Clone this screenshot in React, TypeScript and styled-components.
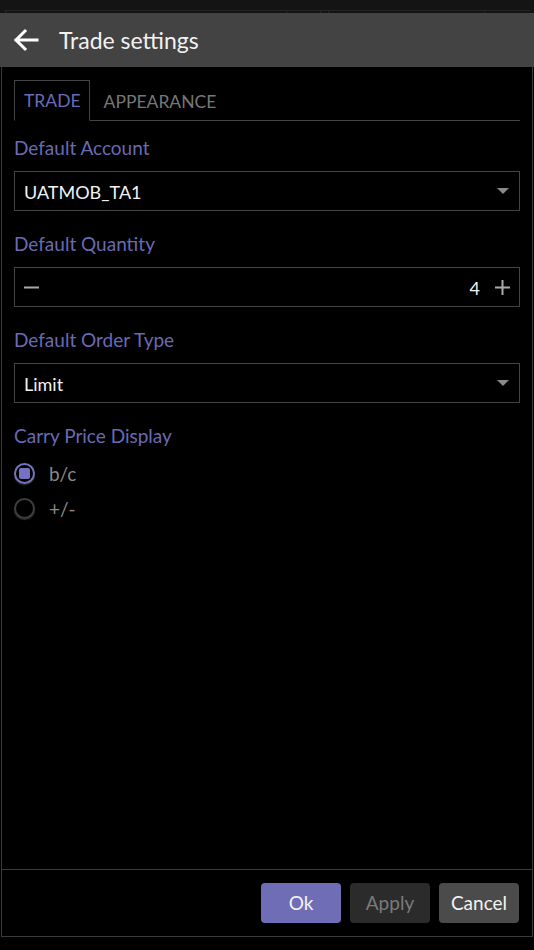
import React from "react";
import styled, { createGlobalStyle } from "styled-components";

const Global = createGlobalStyle`
  html, body { margin: 0; padding: 0; background: #000; }
  body { font-family: "Lato", "Noto Sans", sans-serif; -webkit-font-smoothing: antialiased; }
  * { box-sizing: border-box; }
`;

const Page = styled.div`
  width: 534px;
  height: 950px;
  background: #000;
  display: flex;
  flex-direction: column;
  overflow: hidden;
`;

const TopStrip = styled.div`
  height: 13px;
  background: #141414;
  display: flex;
  align-items: flex-end;
  padding: 0 4px 0 5px;
`;

const StripCell = styled.div<{ $w: number }>`
  width: ${(p) => p.$w}px;
  height: 3px;
  border-top: 1px solid #262626;
  border-left: 1px solid #262626;
  flex: ${(p) => (p.$w === 0 ? 1 : "none")};
`;

const Header = styled.div`
  height: 54px;
  background: #434343;
  display: flex;
  align-items: center;
  padding-left: 13px;
  gap: 20px;
`;

const Title = styled.div`
  color: #f2f2f2;
  font-size: 23px;
  line-height: 26px;
  padding-bottom: 1px;
`;

const Panel = styled.div`
  margin: 0 1px;
  height: 870px;
  border: 1px solid #3b3b3b;
  border-top: none;
  display: flex;
  flex-direction: column;
`;

const Content = styled.div`
  flex: 1;
  padding: 13px 12px 0 12px;
  display: flex;
  flex-direction: column;
`;

const Tabs = styled.div`
  display: flex;
  height: 41px;
  border-bottom: 1px solid #444;
  margin-bottom: 15px;
`;

const Tab = styled.div<{ $active?: boolean }>`
  height: 41px;
  display: flex;
  align-items: center;
  font-size: 17.5px;
  color: ${(p) => (p.$active ? "#6b6bb8" : "#777")};
  border: 1px solid ${(p) => (p.$active ? "#444" : "transparent")};
  border-bottom: ${(p) => (p.$active ? "1px solid #000" : "none")};
  margin-bottom: ${(p) => (p.$active ? "-1px" : "0")};
  padding: 0 8px 0 ${(p) => (p.$active ? "9px" : "13px")};
`;

const Section = styled.div`
  display: flex;
  flex-direction: column;
  margin-bottom: 21px;
`;

const Label = styled.div`
  color: #6a6ab4;
  font-size: 19px;
  line-height: 24px;
  height: 24px;
  margin-bottom: 11px;
`;

const Field = styled.div`
  height: 40px;
  border: 1px solid #444;
  display: flex;
  align-items: center;
  padding: 0 9px 0 9px;
  color: #f2f2f2;
  font-size: 18px;
`;

const FieldText = styled.span<{ $right?: boolean }>`
  flex: 1;
  text-align: ${(p) => (p.$right ? "right" : "left")};
  padding-right: ${(p) => (p.$right ? "15px" : "0")};
  padding-top: 1px;
`;

const Caret = styled.div`
  width: 0;
  height: 0;
  border-left: 6px solid transparent;
  border-right: 6px solid transparent;
  border-top: 6px solid #8a8a8a;
  margin-right: 1px;
`;

const RadioGroup = styled.div`
  display: flex;
  flex-direction: column;
  margin-top: -3px;
`;

const RadioRow = styled.div`
  height: 35px;
  display: flex;
  align-items: center;
  gap: 14px;
  color: #8a8a8a;
  font-size: 19px;
`;

const RadioCircle = styled.div<{ $checked?: boolean }>`
  width: 21px;
  height: 21px;
  border-radius: 50%;
  border: 2px solid ${(p) => (p.$checked ? "#7373c0" : "#3e3e3e")};
  box-shadow: 0 1px 1px rgba(90, 90, 90, 0.6);
  display: flex;
  align-items: center;
  justify-content: center;
`;

const RadioDot = styled.div`
  width: 11px;
  height: 11px;
  border-radius: 2px;
  background: #7373c0;
`;

const Footer = styled.div`
  height: 67px;
  border-top: 1px solid #3b3b3b;
  display: flex;
  justify-content: flex-end;
  align-items: flex-start;
  padding: 13px 13px 0 0;
  gap: 9px;
`;

const Button = styled.button<{ $variant: "primary" | "disabled" | "secondary" }>`
  width: 80px;
  height: 40px;
  border: none;
  border-radius: 4px;
  font-family: inherit;
  font-size: 19px;
  padding: 0 0 2px;
  background: ${(p) =>
    p.$variant === "primary" ? "#6f6db5" : p.$variant === "disabled" ? "#2b2b2b" : "#4b4b4b"};
  color: ${(p) => (p.$variant === "disabled" ? "#7a7a7a" : "#f2f2f2")};
`;

const Icon = styled.svg`
  display: block;
  flex: none;
`;

const BackArrow = () => (
  <Icon width="26" height="24" viewBox="0 0 26 24">
    <path d="M24 12H3M12 3L3 12l9 9" fill="none" stroke="#fff" strokeWidth="3" strokeLinecap="square" />
  </Icon>
);

const Minus = () => (
  <Icon width="15" height="15" viewBox="0 0 15 15">
    <path d="M0 7.5H15" stroke="#aaa" strokeWidth="2" />
  </Icon>
);

const Plus = () => (
  <Icon width="15" height="15" viewBox="0 0 15 15">
    <path d="M0 7.5H15M7.5 0V15" stroke="#aaa" strokeWidth="2" />
  </Icon>
);

export default function App() {
  return (
    <Page>
      <Global />
      <TopStrip>
        <StripCell $w={281} />
        <StripCell $w={34} />
        <StripCell $w={8} />
        <StripCell $w={156} />
        <StripCell $w={0} />
      </TopStrip>
      <Header>
        <BackArrow />
        <Title>Trade settings</Title>
      </Header>
      <Panel>
        <Content>
          <Tabs>
            <Tab $active>TRADE</Tab>
            <Tab>APPEARANCE</Tab>
          </Tabs>
          <Section>
            <Label>Default Account</Label>
            <Field>
              <FieldText>UATMOB_TA1</FieldText>
              <Caret />
            </Field>
          </Section>
          <Section>
            <Label>Default Quantity</Label>
            <Field>
              <Minus />
              <FieldText $right>4</FieldText>
              <Plus />
            </Field>
          </Section>
          <Section>
            <Label>Default Order Type</Label>
            <Field>
              <FieldText>Limit</FieldText>
              <Caret />
            </Field>
          </Section>
          <Section>
            <Label>Carry Price Display</Label>
            <RadioGroup>
              <RadioRow>
                <RadioCircle $checked>
                  <RadioDot />
                </RadioCircle>
                <span>b/c</span>
              </RadioRow>
              <RadioRow>
                <RadioCircle />
                <span>+/-</span>
              </RadioRow>
            </RadioGroup>
          </Section>
        </Content>
        <Footer>
          <Button $variant="primary">Ok</Button>
          <Button $variant="disabled">Apply</Button>
          <Button $variant="secondary">Cancel</Button>
        </Footer>
      </Panel>
    </Page>
  );
}
